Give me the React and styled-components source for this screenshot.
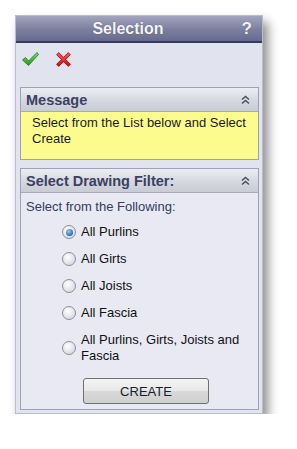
import React from "react";
import styled, { createGlobalStyle } from "styled-components";

const Global = createGlobalStyle`
  html, body { margin: 0; padding: 0; background: #ffffff; }
  body { font-family: "Liberation Sans", Arial, sans-serif; }
`;

const Page = styled.div`
  padding: 15px 0 0 15px;
`;

const Panel = styled.div`
  width: 246px;
  height: 397px;
  background: #e1e4ee;
  border: 1px solid #b9bdcc;
  box-shadow: 5px 7px 10px rgba(0, 0, 0, 0.45);
  display: flex;
  flex-direction: column;
`;

const TitleBar = styled.div`
  height: 25px;
  background: linear-gradient(#a2a5bc, #7b7f9f 55%, #666a8d);
  border-bottom: 2px solid #363a5c;
  display: flex;
  align-items: center;
  justify-content: center;
  padding-right: 22px;
  position: relative;
  color: #f4f4f8;
  font-weight: bold;
  font-size: 16px;
  text-shadow: 0 0 1px rgba(40, 40, 70, 0.6);
`;

const Help = styled.span`
  position: absolute;
  right: 10px;
  top: 3px;
  font-size: 17px;
  font-weight: bold;
`;

const ActionRow = styled.div`
  height: 31px;
  display: flex;
  align-items: flex-start;
  gap: 15px;
  padding: 8px 0 0 5px;
`;

const Group = styled.div`
  margin: ${(p) => p.$mt}px 3px 0 4px;
  border: 1px solid #9ea2b3;
  background: ${(p) => p.$bg};
  display: flex;
  flex-direction: column;
  flex: ${(p) => (p.$grow ? 1 : "none")};
  margin-bottom: ${(p) => (p.$grow ? 3 : 0)}px;
`;

const GroupHeader = styled.div`
  height: 23px;
  background: linear-gradient(#eceef3, #d6d8e0 55%, #c9cbd5);
  border-bottom: 1px solid #a7aab8;
  display: flex;
  align-items: center;
  justify-content: space-between;
  padding: 0 8px 0 5px;
  font-weight: bold;
  font-size: 14.5px;
  color: #3a4162;
`;

const MessageBody = styled.div`
  padding: 3px 8px 0 11px;
  font-size: 13px;
  line-height: 16px;
  color: #1b1b1b;
  height: 44px;
`;

const FilterBody = styled.div`
  display: flex;
  flex-direction: column;
  padding: 6px 6px 0 5px;
  font-size: 13px;
  color: #222;
`;

const Prompt = styled.div`
  line-height: 16px;
  color: #343c5e;
  margin-bottom: 9px;
`;

const RadioList = styled.div`
  display: flex;
  flex-direction: column;
  gap: 11px;
  padding-left: 36px;
`;

const RadioRow = styled.label`
  display: flex;
  align-items: center;
  gap: 5px;
  line-height: 16px;
  color: #111;
`;

const RadioCircle = styled.span`
  flex: none;
  width: 12px;
  height: 12px;
  border-radius: 50%;
  border: 1px solid #8c8f97;
  background: radial-gradient(circle at 40% 35%, #ffffff, #dcdde2 70%, #c4c6cd);
  display: flex;
  align-items: center;
  justify-content: center;
`;

const RadioDot = styled.span`
  width: 7px;
  height: 7px;
  border-radius: 50%;
  background: radial-gradient(circle at 40% 35%, #8fd0f5, #1f6fb0 70%, #124e85);
`;

const ButtonRow = styled.div`
  display: flex;
  justify-content: center;
  margin-top: 14px;
  padding-left: 14px;
`;

const Button = styled.button`
  width: 126px;
  height: 26px;
  border: 1px solid #707070;
  border-radius: 3px;
  background: linear-gradient(#f4f4f4, #e8e8e8 50%, #d9d9d9 51%, #cfcfcf);
  font-family: "Liberation Sans", Arial, sans-serif;
  font-size: 13px;
  color: #1a1a2a;
  padding: 0;
`;

const MultiLabel = styled.span`
  max-width: 160px;
`;

const Chevron = () => (
  <svg width="9" height="10" viewBox="0 0 9 10">
    <path d="M1 4.5 L4.5 1.5 L8 4.5 M1 8.5 L4.5 5.5 L8 8.5" stroke="#4a4f63" strokeWidth="1.5" fill="none" />
  </svg>
);

const Check = () => (
  <svg width="19" height="16" viewBox="0 0 18 16">
    <defs>
      <linearGradient id="gck" x1="0" y1="0" x2="0" y2="1">
        <stop offset="0" stopColor="#7ee06a" />
        <stop offset="1" stopColor="#1c9a18" />
      </linearGradient>
    </defs>
    <path d="M1 9 L4 6.5 L7 10 L15.5 1.5 L17 3.5 L7 14.5 Z" fill="url(#gck)" stroke="#147a12" strokeWidth="0.8" strokeLinejoin="round" />
  </svg>
);

const Cross = () => (
  <svg width="17" height="17" viewBox="0 0 16 16">
    <defs>
      <linearGradient id="gx" x1="0" y1="0" x2="0" y2="1">
        <stop offset="0" stopColor="#ff5a5a" />
        <stop offset="1" stopColor="#c80f0f" />
      </linearGradient>
    </defs>
    <path d="M1.5 3.5 L3.5 1.5 L8 6 L12.5 1.5 L14.5 3.5 L10 8 L14.5 12.5 L12.5 14.5 L8 10 L3.5 14.5 L1.5 12.5 L6 8 Z" fill="url(#gx)" stroke="#9a0a0a" strokeWidth="0.8" strokeLinejoin="round" />
  </svg>
);

const options = [
  "All Purlins",
  "All Girts",
  "All Joists",
  "All Fascia",
  "All Purlins, Girts, Joists and Fascia",
];

export default function App() {
  return (
    <>
      <Global />
      <Page>
        <Panel>
          <TitleBar>
            Selection
            <Help>?</Help>
          </TitleBar>
          <ActionRow>
            <Check />
            <Cross />
          </ActionRow>
          <Group $mt={5} $bg="#fcfc8e">
            <GroupHeader>
              Message
              <Chevron />
            </GroupHeader>
            <MessageBody>Select from the List below and Select Create</MessageBody>
          </Group>
          <Group $mt={8} $bg="#e8e9f2" $grow>
            <GroupHeader>
              Select Drawing Filter:
              <Chevron />
            </GroupHeader>
            <FilterBody>
              <Prompt>Select from the Following:</Prompt>
              <RadioList>
                {options.map((o, i) => (
                  <RadioRow key={o}>
                    <RadioCircle>{i === 0 && <RadioDot />}</RadioCircle>
                    <MultiLabel>{o}</MultiLabel>
                  </RadioRow>
                ))}
              </RadioList>
              <ButtonRow>
                <Button>CREATE</Button>
              </ButtonRow>
            </FilterBody>
          </Group>
        </Panel>
      </Page>
    </>
  );
}
